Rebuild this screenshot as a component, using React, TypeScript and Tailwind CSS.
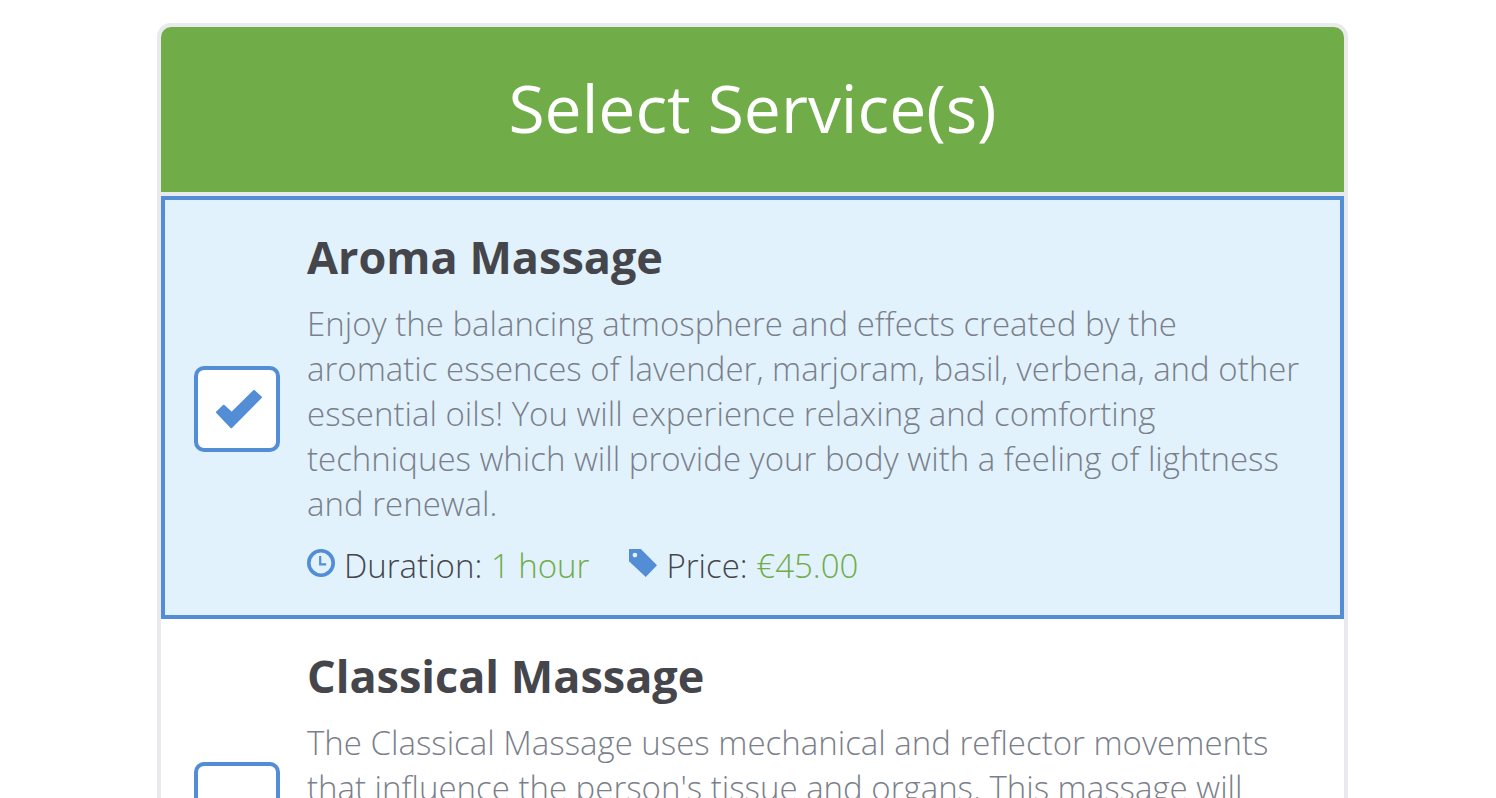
import React, { useState } from "react";

type Service = {
  id: string;
  name: string;
  description: string;
  duration: string;
  price: string;
};

const services: Service[] = [
  {
    id: "aroma",
    name: "Aroma Massage",
    description:
      "Enjoy the balancing atmosphere and effects created by the aromatic essences of lavender, marjoram, basil, verbena, and other essential oils! You will experience relaxing and comforting techniques which will provide your body with a feeling of lightness and renewal.",
    duration: "1 hour",
    price: "€45.00",
  },
  {
    id: "classical",
    name: "Classical Massage",
    description:
      "The Classical Massage uses mechanical and reflector movements that influence the person's tissue and organs. This massage will improve your blood circulation, relax the muscles and relieve the tension and stress of the whole body.",
    duration: "1 hour",
    price: "€40.00",
  },
];

function ClockIcon() {
  return (
    <svg viewBox="0 0 28 28" className="mb-1.5 h-7 w-7" fill="none" stroke="#528dd6" aria-hidden="true">
      <circle cx="14" cy="14" r="12.2" strokeWidth="3.6" />
      <path d="M13.2 7v8.3h6" strokeWidth="2.2" />
    </svg>
  );
}

function TagIcon() {
  return (
    <svg viewBox="0.6 1.2 28.4 28.2" className="mb-1.5 h-7 w-7" fill="#528dd6" aria-hidden="true">
      <path
        fillRule="evenodd"
        d="M.6 1.2h12L29 17.6 17.6 29.4.6 13.4zM6.6 4.8a2.4 2.4 0 1 0 0 4.8 2.4 2.4 0 0 0 0-4.8z"
      />
    </svg>
  );
}

function CheckIcon() {
  return (
    <svg
      viewBox="0 0 52 44"
      className="pointer-events-none invisible col-start-1 row-start-1 h-11 w-[52px] peer-checked:visible"
      fill="#528dd6"
      stroke="#528dd6"
      strokeWidth="2"
      strokeLinejoin="round"
      aria-hidden="true"
    >
      <path d="M6 25.2 12.7 18.8 20.7 26 43 3.9 49.9 10.3 20.3 40.2z" />
    </svg>
  );
}

type RowProps = {
  service: Service;
  checked: boolean;
  onToggle: () => void;
};

function ServiceRow({ service, checked, onToggle }: RowProps) {
  return (
    <li
      className={
        checked
          ? "flex items-center border-4 border-[#528dd6] bg-[#e1f2fc] px-[29px] pt-[29px] pb-[27px]"
          : "-mt-1 flex items-center border-4 border-transparent px-[29px] pt-[29px] pb-9"
      }
    >
      <div className="mr-[27px] grid shrink-0 place-items-center">
        <input
          id={service.id}
          type="checkbox"
          checked={checked}
          onChange={onToggle}
          className="peer col-start-1 row-start-1 h-[86px] w-[86px] appearance-none rounded-[10px] border-4 border-[#528dd6] bg-white"
        />
        <CheckIcon />
      </div>
      <div>
        <label htmlFor={service.id} className="block text-[45px] leading-[56px] font-bold text-[#45464b]">
          {service.name}
        </label>
        <p className="mt-4 text-[33px] leading-[45px] text-[#7b7f8a]">{service.description}</p>
        <div className="mt-[17px] flex gap-10 text-[33px] leading-[45px] text-[#45464b]">
          <div className="flex items-center gap-[9px]">
            <ClockIcon />
            <p>
              Duration: <span className="text-[#70ac48]">{service.duration}</span>
            </p>
          </div>
          <div className="flex items-center gap-[9px]">
            <TagIcon />
            <p>
              Price: <span className="text-[#70ac48]">{service.price}</span>
            </p>
          </div>
        </div>
      </div>
    </li>
  );
}

export default function App() {
  const [selected, setSelected] = useState<string[]>(["aroma"]);

  const toggle = (id: string) => {
    setSelected(
      selected.includes(id) ? selected.filter((item) => item !== id) : [...selected, id]
    );
  };

  return (
    <main className="h-screen overflow-hidden bg-white pt-[23px] pr-[148px] pl-[157px] font-['Open_Sans',sans-serif] font-light">
      <section className="overflow-hidden rounded-[14px] border-4 border-[#e9eaee]">
        <h1 className="border-b-4 border-[#e9eaee] bg-[#70ac48] pt-9 pb-[41px] text-center text-[66px] leading-[88px] font-normal text-white">
          Select Service(s)
        </h1>
        <ul>
          {services.map((service) => (
            <ServiceRow
              key={service.id}
              service={service}
              checked={selected.includes(service.id)}
              onToggle={() => toggle(service.id)}
            />
          ))}
        </ul>
      </section>
    </main>
  );
}
